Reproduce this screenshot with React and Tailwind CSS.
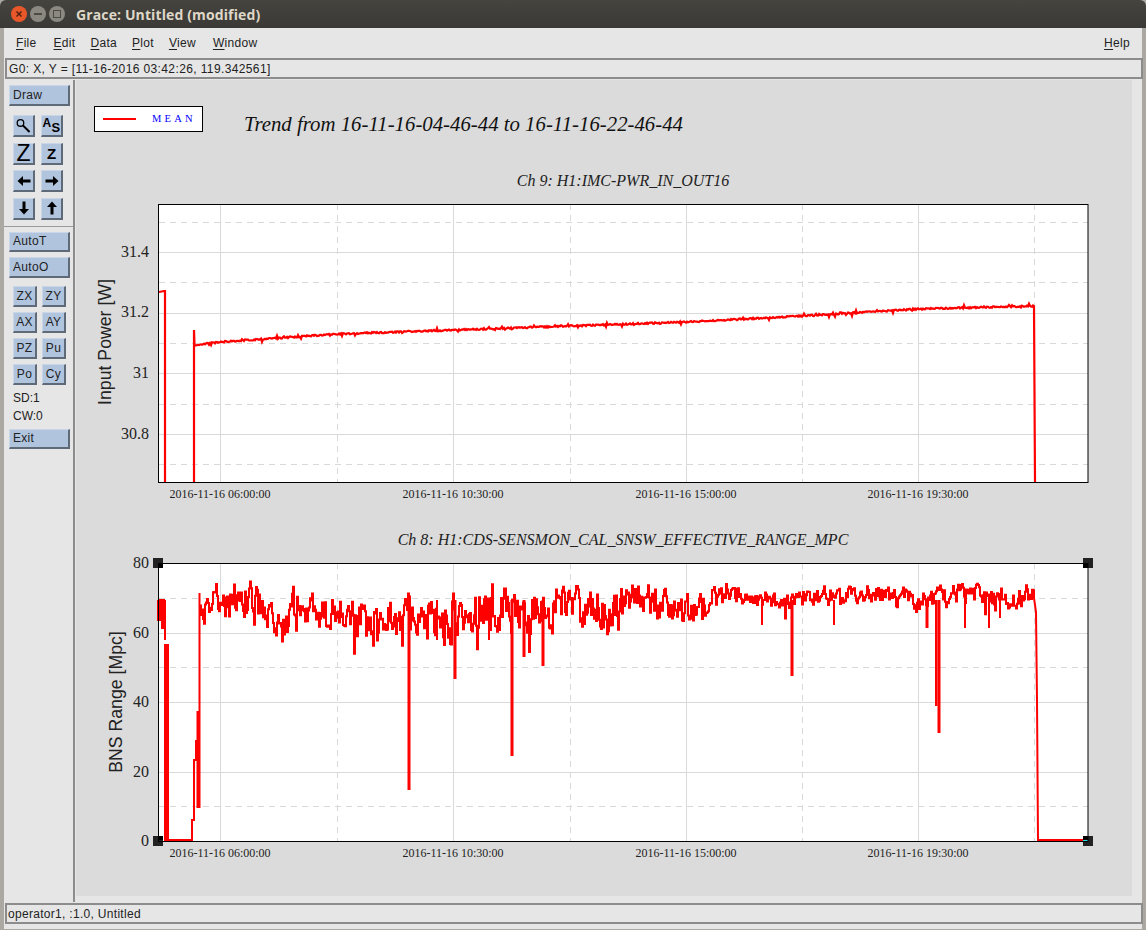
import React from 'react';

const SANS = "font-['Liberation_Sans',Arial,sans-serif]";

function makeRandom(seed) {
  let a = seed;
  return () => {
    a = (a + 0x6d2b79f5) | 0;
    let t = Math.imul(a ^ (a >>> 15), 1 | a);
    t = (t + Math.imul(t ^ (t >>> 7), 61 | t)) ^ t;
    return ((t ^ (t >>> 14)) >>> 0) / 4294967296;
  };
}

function lerpTable(table, x) {
  for (let i = 1; i < table.length; i++) {
    if (x <= table[i][0]) {
      const [x0, ...a] = table[i - 1];
      const [x1, ...b] = table[i];
      const t = (x - x0) / (x1 - x0);
      return a.map((v, k) => v + (b[k] - v) * t);
    }
  }
  return table[table.length - 1].slice(1);
}

// input power trace
function powerPath() {
  const rand = makeRandom(9);
  const base = [[194, 345], [220, 342], [337, 334], [453, 330], [570, 326], [686, 322], [802, 316], [918, 309], [1034, 306]];
  let d = 'M159 292 L164 291 L165 291 L165 482 M194 482 L194 330 L194.5 345';
  for (let x = 196; x < 1034; x += 1) {
    const [y] = lerpTable(base, x);
    const spike = rand() < 0.1 ? (rand() - 0.5) * 5 : 0;
    d += ` L${x} ${(y + (rand() - 0.5) * 1.5 + spike).toFixed(1)}`;
  }
  d += ' L1034 306 L1035 482';
  return d;
}

const bandTable = [
  [200, 603, 18], [260, 611, 22], [340, 607, 22], [400, 615, 27], [450, 610, 27],
  [520, 609, 24], [560, 612, 22], [620, 616, 22], [680, 608, 18], [720, 604, 13],
  [790, 601, 11], [830, 597, 10], [920, 597, 11], [1034, 596, 13],
];
const dips = [
  [409, 790, 3], [437, 640, 2], [455, 679, 3], [489, 640, 2], [512, 756, 3], [524, 657, 3],
  [543, 666, 3], [792, 676, 3], [762, 625, 2], [834, 625, 2], [927, 628, 3], [965, 628, 2],
  [989, 628, 2], [1000, 618, 2],
];

// range trace, stepped like the plotted data
function rangePath() {
  const rand = makeRandom(41);
  let d = 'M158 600 V620 H160 V600 H162 V628 H164 V600 M165 600 V640 M199.5 808 V593';
  let last = 0;
  let slow = 0;
  for (let x = 200; x < 1034; x += 1) {
    const [c, amp] = lerpTable(bandTable, x);
    slow = slow * 0.96 + (rand() - 0.5) * amp * 0.35;
    last = last * 0.3 + (rand() - 0.5) * 1.5 * amp;
    let y = c + last + slow;
    if (rand() < 0.03) y += amp * 0.9;
    y = Math.max(581, y);
    d += ` V${y.toFixed(1)} H${x + 1}`;
  }
  d += ' V598 L1036 612 L1037 700 L1038 840 H1088';
  return d;
}

const minorX = [337, 570, 802, 1034];
const majorX = [220, 453, 686, 918];
const tickLabels = [
  [220, '2016-11-16 06:00:00'],
  [453, '2016-11-16 10:30:00'],
  [686, '2016-11-16 15:00:00'],
  [918, '2016-11-16 19:30:00'],
];

// Plot box is x 158.5..1088, coordinates below are screen pixels
function Plot({ top, majorY, minorY, labels, yTitle, titleX, titleY, children }) {
  const bottom = top + 278;
  return (
    <svg className="block" width="1056" height="320" viewBox={`76 ${top - 10} 1056 320`}>
      <rect x="158.5" y={top + 0.5} width="929.5" height="278" fill="#fff" />
      <g stroke="#d9d9d9" strokeWidth="1" shapeRendering="crispEdges">
        {majorY.map((y) => <line key={y} x1="159" x2="1088" y1={y} y2={y} />)}
        {minorY.map((y) => <line key={y} x1="159" x2="1088" y1={y} y2={y} strokeDasharray="6 5" />)}
        {majorX.map((x) => <line key={x} x1={x} x2={x} y1={top} y2={bottom} />)}
        {minorX.map((x) => <line key={x} x1={x} x2={x} y1={top} y2={bottom} strokeDasharray="6 5" />)}
      </g>
      {children}
      <rect x="158.5" y={top + 0.5} width="929.5" height="278" fill="none" stroke="#000" strokeWidth="1" />
      {labels.map(([y, text]) => (
        <text key={text} x="149" y={y + 5} textAnchor="end" fontFamily="'Liberation Serif',serif" fontSize="16" fill="#222">{text}</text>
      ))}
      {tickLabels.map(([x, text]) => (
        <text key={text} x={x} y={bottom + 16} textAnchor="middle" fontFamily="'Liberation Serif',serif" fontSize="12" fill="#222">{text}</text>
      ))}
      <text
        transform={`translate(${titleX} ${titleY}) rotate(-90)`}
        textAnchor="middle"
        fontFamily="'Liberation Sans',Arial,sans-serif"
        fontSize="17.7"
        fill="#222"
      >
        {yTitle}
      </text>
    </svg>
  );
}

function Handles() {
  const h = (x, y, key) => <rect key={key} x={x} y={y} width="10" height="10" fill="#222" />;
  return (
    <g>
      {h(153, 558, 'a')}{h(1083, 558, 'b')}{h(153, 836, 'c')}{h(1083, 836, 'd')}
      <rect x="159" y="564" width="4" height="4" fill="#000" />
      <rect x="1083" y="564" width="5" height="4" fill="#000" />
      <rect x="159" y="836" width="4" height="4" fill="#000" />
      <rect x="1083" y="836" width="5" height="4" fill="#000" />
      <rect x="1083" y="840" width="5" height="1" fill="#22e0e0" />
    </g>
  );
}

const bevel = 'bg-[#b0c4de] border-t border-l border-t-[#c9d6e8] border-l-[#c9d6e8] border-b-2 border-r-2 border-b-[#5e6a78] border-r-[#5e6a78]';

function WideButton({ children, className = '' }) {
  return (
    <div className={`${bevel} ml-[5px] w-[61px] h-[20.5px] flex items-center pl-[3px] text-[12px] leading-none tracking-[0.3px] text-[#222] ${className}`}>
      {children}
    </div>
  );
}

function IconButton({ children }) {
  return <div className={`${bevel} w-[22px] h-[22px] flex items-center justify-center text-black`}>{children}</div>;
}

function SmallButton({ children }) {
  return (
    <div className={`${bevel} w-[24px] h-[21px] flex items-center justify-center text-[12px] leading-none tracking-[0.3px] text-[#222]`}>
      {children}
    </div>
  );
}

function Arrow({ dir }) {
  const rotate = { left: 0, right: 180, down: 270, up: 90 }[dir];
  return (
    <svg width="14" height="14" viewBox="0 0 14 14" style={{ transform: `rotate(${rotate}deg)` }}>
      <path d="M0.5 7 L6 2 V5.5 H13.5 V8.5 H6 V12 Z" fill="#000" />
    </svg>
  );
}

function MenuItem({ first, rest, className = '' }) {
  return (
    <span className={`text-[12px] leading-none tracking-[0.3px] text-[#222] ${className}`}>
      <span className="underline underline-offset-[2px]">{first}</span>{rest}
    </span>
  );
}

function WindowDot({ className, children }) {
  return <div className={`w-[16px] h-[16px] rounded-full flex items-center justify-center ${className}`}>{children}</div>;
}

export default function App() {
  const power = powerPath();
  const range = rangePath();

  return (
    <div className={`w-[1146px] h-[930px] flex flex-col overflow-hidden bg-[#aba7a1] ${SANS}`}>
      {/* title bar */}
      <div className="h-[28px] shrink-0 flex items-center rounded-t-[6px] bg-gradient-to-b from-[#45443f] to-[#3a3935] pl-[11px]">
        <div className="flex items-center gap-[3px]">
          <WindowDot className="bg-[#e8572a]">
            <svg width="8" height="8" viewBox="0 0 8 8"><path d="M1.5 1.5 L6.5 6.5 M6.5 1.5 L1.5 6.5" stroke="#4a2010" strokeWidth="1.4" /></svg>
          </WindowDot>
          <WindowDot className="bg-[#8a8880]"><div className="w-[8px] h-[2px] bg-[#4b4a45]" /></WindowDot>
          <WindowDot className="bg-[#8a8880]"><div className="w-[8px] h-[8px] border border-[#4b4a45]" /></WindowDot>
        </div>
        <span className="ml-[11px] font-['Open_Sans',sans-serif] font-bold text-[14px] tracking-[0.12px] text-[#dfd8c8]">Grace: Untitled (modified)</span>
      </div>

      {/* window content */}
      <div className="flex-1 min-h-0 ml-[4px] mr-[4px] mb-[1px] flex flex-col bg-[#e6e6e6]">
        <div className="h-[30px] shrink-0 flex items-center pl-[12px] pr-[12px] pb-[1px]">
          <MenuItem first="F" rest="ile" />
          <MenuItem first="E" rest="dit" className="ml-[17px]" />
          <MenuItem first="D" rest="ata" className="ml-[15px]" />
          <MenuItem first="P" rest="lot" className="ml-[15px]" />
          <MenuItem first="V" rest="iew" className="ml-[15px]" />
          <MenuItem first="W" rest="indow" className="ml-[17px]" />
          <MenuItem first="H" rest="elp" className="ml-auto" />
        </div>
        <div className="h-[21px] shrink-0 mr-[-1px] ml-[1px] border-2 border-[#8c8c8c] flex items-center pl-[2px] text-[12px] leading-none tracking-[0.38px] text-[#222]">
          G0: X, Y = [11-16-2016 03:42:26, 119.342561]
        </div>

        <div className="flex-1 min-h-0 flex pt-[1px]">
          {/* tool column */}
          <div className="w-[71px] shrink-0 border-r-2 border-[#8c8c8c] pt-[5px] flex flex-col">
            <WideButton>Draw</WideButton>
            <div className="grid grid-cols-[22px_22px] gap-x-[6px] gap-y-[5.5px] ml-[9px] mt-[9.5px]">
              <IconButton>
                <svg width="20" height="20" viewBox="0 0 22 22" fill="none" stroke="#000">
                  <circle cx="7.5" cy="7.5" r="3.8" strokeWidth="1.5" />
                  <path d="M10 10 L18 18" strokeWidth="2.4" />
                </svg>
              </IconButton>
              <IconButton>
                <span className="relative w-[18px] h-[17px] font-bold text-[12px] leading-none">
                  <span className="absolute left-0 top-0">A</span>
                  <span className="absolute left-[9px] top-[4px] text-[13px]">S</span>
                </span>
              </IconButton>
              <IconButton><span className="text-[23px] leading-none">Z</span></IconButton>
              <IconButton><span className="text-[15px] leading-none font-bold">Z</span></IconButton>
              <IconButton><Arrow dir="left" /></IconButton>
              <IconButton><Arrow dir="right" /></IconButton>
              <IconButton><Arrow dir="down" /></IconButton>
              <IconButton><Arrow dir="up" /></IconButton>
            </div>
            <div className="h-[1px] bg-[#9a9a9a] mt-[6px]" />
            <WideButton className="mt-[5px]">AutoT</WideButton>
            <WideButton className="mt-[5px]">AutoO</WideButton>
            <div className="grid grid-cols-[24px_24px] gap-x-[5px] gap-y-[5px] ml-[9px] mt-[8px]">
              <SmallButton>ZX</SmallButton>
              <SmallButton>ZY</SmallButton>
              <SmallButton>AX</SmallButton>
              <SmallButton>AY</SmallButton>
              <SmallButton>PZ</SmallButton>
              <SmallButton>Pu</SmallButton>
              <SmallButton>Po</SmallButton>
              <SmallButton>Cy</SmallButton>
            </div>
            <div className="ml-[9px] mt-[4px] text-[12px] leading-[18px] text-[#222]">
              <p>SD:1</p>
              <p>CW:0</p>
            </div>
            <WideButton className="mt-[4px]">Exit</WideButton>
          </div>

          {/* canvas */}
          <div className="flex-1 min-w-0 pl-[1px] pr-[10px] pb-[6px]">
            <div className="h-full bg-[#dbdbdb] flex flex-col">
              <div className="flex items-start pt-[26px] pl-[18px]">
                <div className="w-[109px] h-[26px] bg-white border border-black flex items-center pl-[8px]">
                  <div className="w-[33px] h-[2px] bg-[#ff0000]" />
                  <span className="ml-[16px] font-['Liberation_Serif',serif] text-[10.5px] leading-none tracking-[3.2px] text-[#0000ff]">MEAN</span>
                </div>
                <h1 className="ml-[41px] mt-[5px] font-['Liberation_Serif',serif] italic font-normal text-[20.8px] leading-[26px] text-[#111] whitespace-nowrap">
                  Trend from 16-11-16-04-46-44 to 16-11-16-22-46-44
                </h1>
              </div>
              <p className="ml-[82px] w-[930px] mt-[35px] h-[18px] text-center font-['Liberation_Serif',serif] italic text-[16px] leading-[18px] text-[#222]">
                Ch 9: H1:IMC-PWR_IN_OUT16
              </p>
              <div className="mt-[4px] h-[336px]">
                <Plot
                  top={204}
                  majorY={[252.5, 313.5, 373.5, 434.5]}
                  minorY={[222.5, 282.5, 343.5, 404.5, 464.5]}
                  labels={[[252, '31.4'], [312, '31.2'], [373, '31'], [434, '30.8']]}
                  yTitle="Input Power [W]"
                  titleX={111}
                  titleY={342}
                >
                  <path d={power} fill="none" stroke="#ff0000" strokeWidth="2.2" />
                </Plot>
              </div>
              <p className="ml-[82px] w-[930px] mt-[1px] h-[18px] text-center font-['Liberation_Serif',serif] italic text-[16px] leading-[18px] text-[#222]">
                Ch 8: H1:CDS-SENSMON_CAL_SNSW_EFFECTIVE_RANGE_MPC
              </p>
              <div className="mt-[4px]">
                <Plot
                  top={563}
                  majorY={[633.5, 702.5, 772.5]}
                  minorY={[598.5, 667.5, 806.5]}
                  labels={[[563, '80'], [633, '60'], [702, '40'], [772, '20'], [841, '0']]}
                  yTitle="BNS Range [Mpc]"
                  titleX={122}
                  titleY={702}
                >
                  <path d={range} fill="none" stroke="#ff0000" strokeWidth="2" />
                  <rect x="159" y="599" width="6" height="3" fill="#ff0000" />
                  <rect x="164" y="644" width="5" height="197" fill="#ff0000" />
                  <path d="M169 840 H192 V820 H194 V760 H196 V740" fill="none" stroke="#ff0000" strokeWidth="2" />
                  <rect x="196.5" y="711" width="3" height="97" fill="#ff0000" />
                  {dips.map(([x, y, w]) => (
                    <rect key={x} x={x - w / 2} y="600" width={w} height={y - 600} fill="#ff0000" />
                  ))}
                  <rect x="935" y="600" width="2.5" height="106" fill="#ff0000" />
                  <rect x="937.5" y="600" width="3" height="133" fill="#ff0000" />
                  <Handles />
                </Plot>
              </div>
            </div>
          </div>
        </div>

        <div className="h-[21px] shrink-0 mt-[1px] mb-[5px] ml-[1px] mr-[-1px] border-2 border-[#8c8c8c] flex items-center pl-[1px] text-[12px] leading-none tracking-[0.3px] text-[#222]">
          operator1, :1.0, Untitled
        </div>
      </div>
    </div>
  );
}
